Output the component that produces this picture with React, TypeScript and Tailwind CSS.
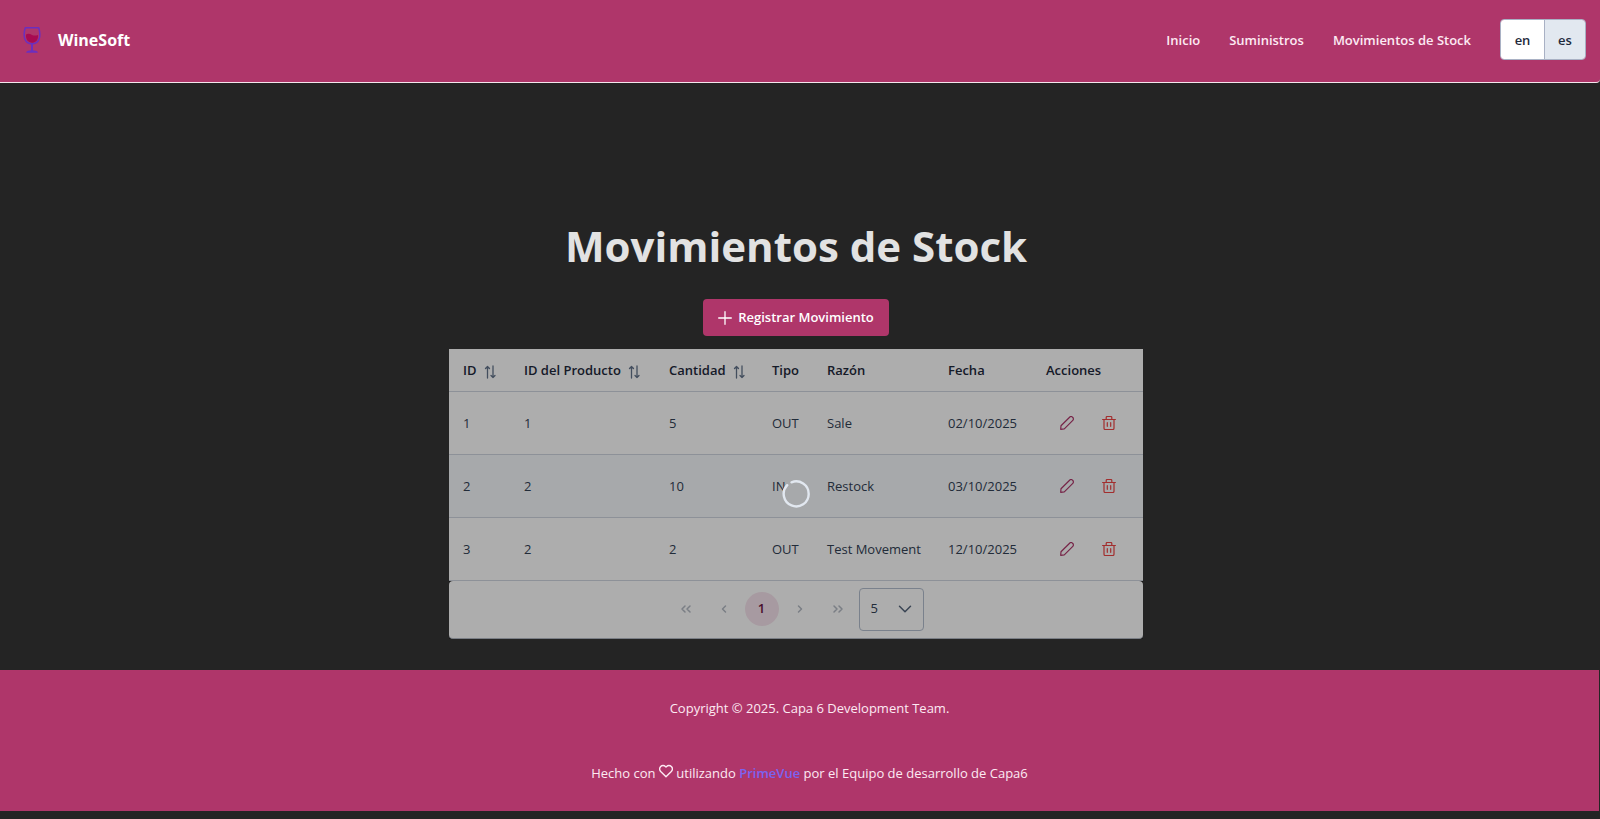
import React from "react";

type Movement = {
  id: number;
  product: number;
  quantity: number;
  type: string;
  reason: string;
  date: string;
};

const movements: Movement[] = [
  { id: 1, product: 1, quantity: 5, type: "OUT", reason: "Sale", date: "02/10/2025" },
  { id: 2, product: 2, quantity: 10, type: "IN", reason: "Restock", date: "03/10/2025" },
  { id: 3, product: 2, quantity: 2, type: "OUT", reason: "Test Movement", date: "12/10/2025" },
];

const columns = [
  { label: "ID", sortable: true, width: "w-[61px]" },
  { label: "ID del Producto", sortable: true, width: "w-[145px]" },
  { label: "Cantidad", sortable: true, width: "w-[103px]" },
  { label: "Tipo", sortable: false, width: "w-[55px]" },
  { label: "Razón", sortable: false, width: "w-[121px]" },
  { label: "Fecha", sortable: false, width: "w-[98px]" },
  { label: "Acciones", sortable: false, width: "w-[111px]" },
];

function WineLogo() {
  return (
    <svg viewBox="0 0 28 28" className="size-7" fill="none" aria-hidden="true">
      <path
        d="M8 8.500c2-1.200 4-.6 6 .4s4.200.8 6 0c.5 4.600-2.200 7.800-6 7.800s-6.500-3.400-6-8.200z"
        fill="#a80a52"
      />
      <path
        d="M7.300 1.800h13.400c1.200 4 1.600 8.200.4 11.200-1.200 3.200-4 4.800-7.100 4.800s-5.900-1.600-7.100-4.800C5.700 10 6.100 5.800 7.300 1.800z"
        stroke="#6a2fc0"
        strokeWidth="1.500"
        strokeLinejoin="round"
      />
      <path d="M14 17.800v7.500" stroke="#6a2fc0" strokeWidth="2" />
      <path d="M8 26.700c.4-1.600 3-2.400 6-2.400s5.600.8 6 2.400z" fill="#6a2fc0" />
    </svg>
  );
}

function SortIcon() {
  return (
    <svg
      viewBox="0 0 14 14"
      className="mt-0.5 size-[14px] text-[#64748b]"
      fill="none"
      stroke="currentColor"
      strokeWidth="1.300"
      strokeLinecap="round"
      strokeLinejoin="round"
      aria-hidden="true"
    >
      <path d="M4.500 13V1.500M2.500 3.500l2-2 2 2M10 1v11.500M8 10.500l2 2 2-2" />
    </svg>
  );
}

function PencilIcon() {
  return (
    <svg
      viewBox="0 0 14 14"
      className="size-[14px]"
      fill="none"
      stroke="currentColor"
      strokeWidth="1.200"
      strokeLinejoin="round"
      aria-hidden="true"
    >
      <path d="M.7 13.300l.3-3.600 8.600-8.500c.8-.8 2-.8 2.800-.1l.4.400c.8.800.8 2 0 2.800L4.300 12.900z" />
    </svg>
  );
}

function TrashIcon() {
  return (
    <svg
      viewBox="0 0 14 14"
      className="size-[14px]"
      fill="none"
      stroke="currentColor"
      strokeWidth="1.200"
      strokeLinecap="round"
      strokeLinejoin="round"
      aria-hidden="true"
    >
      <path d="M.6 3.500h12.800M2 3.500v8.700c0 .8.500 1.300 1.300 1.300h7.400c.8 0 1.300-.5 1.300-1.300V3.500M4.200 3.300V1.600c0-.7.400-1.100 1.100-1.100h3.400c.7 0 1.100.4 1.100 1.100v1.700M5.300 6.700v3.600M8.700 6.700v3.600" />
    </svg>
  );
}

function Chevrons({ d }: { d: string }) {
  return (
    <svg
      viewBox="0 0 14 14"
      className="size-[14px]"
      fill="none"
      stroke="currentColor"
      strokeWidth="1.500"
      strokeLinecap="round"
      strokeLinejoin="round"
      aria-hidden="true"
    >
      <path d={d} />
    </svg>
  );
}

function PageButton({ label, d }: { label: string; d: string }) {
  return (
    <button
      type="button"
      aria-label={label}
      className="flex size-[34px] items-center justify-center rounded-full text-[#b4bac4]"
    >
      <Chevrons d={d} />
    </button>
  );
}

function Header() {
  return (
    <header className="flex items-center justify-between rounded-br border-b border-[#f4e6ed] bg-[#af366a] px-[14px] pt-[19px] pb-[22px]">
      <div className="flex items-center gap-3 pl-1">
        <WineLogo />
        <span className="text-base font-bold text-white">WineSoft</span>
      </div>
      <div className="flex items-center gap-[29px]">
        <nav className="flex gap-[29px] pt-0.5 text-[13px] font-semibold text-[#fdeaf3]">
          <a href="#inicio">Inicio</a>
          <a href="#suministros">Suministros</a>
          <a href="#movimientos">Movimientos de Stock</a>
        </nav>
        <div className="flex h-[41px] overflow-hidden rounded border border-[#a9b1c4] text-[13px] font-semibold text-[#1e293b]">
          <button type="button" className="w-11 border-r border-[#a9b1c4] bg-white pt-0.5">
            en
          </button>
          <button type="button" aria-pressed="true" className="w-10 bg-[#e2e8f0] pt-0.5">
            es
          </button>
        </div>
      </div>
    </header>
  );
}

function Paginator() {
  return (
    <div className="flex h-[58px] items-center justify-center gap-1 rounded border-b border-[#b4bac4] bg-white">
      <PageButton label="Primera página" d="M6 4 3 7l3 3M11 4 8 7l3 3" />
      <PageButton label="Página anterior" d="M8.500 4l-3 3 3 3" />
      <button
        type="button"
        aria-current="page"
        className="size-[34px] rounded-full bg-[#f7e4ed] text-[13px] font-semibold text-[#6b1240]"
      >
        1
      </button>
      <PageButton label="Página siguiente" d="M5.500 4l3 3-3 3" />
      <PageButton label="Última página" d="M3 4l3 3-3 3M8 4l3 3-3 3" />
      <div className="grid items-center">
        <select
          aria-label="Filas por página"
          defaultValue="5"
          className="col-start-1 row-start-1 h-[43px] w-[65px] appearance-none rounded border border-[#b4bfce] bg-white pl-[11px] text-[13px]"
        >
          <option>5</option>
          <option>10</option>
          <option>20</option>
        </select>
        <span className="pointer-events-none col-start-1 row-start-1 mr-3 justify-self-end text-[#55657c]">
          <Chevrons d="M1.500 4.300 7 9.800l5.500-5.500" />
        </span>
      </div>
    </div>
  );
}

function MovementsTable() {
  return (
    <section className="relative w-[694px] max-w-full text-[13px] text-[#334155]" aria-busy="true">
      <table className="w-full table-fixed border-collapse bg-white text-left">
        <thead>
          <tr className="h-[42px] border-b border-[#d0d6e0]">
            {columns.map((c) => (
              <th
                key={c.label}
                scope="col"
                className={`${c.width} pt-0.5 pl-[14px] font-semibold whitespace-nowrap text-[#1e293b]`}
              >
                <span className="flex items-center gap-1.5">
                  {c.label}
                  {c.sortable && <SortIcon />}
                </span>
              </th>
            ))}
          </tr>
        </thead>
        <tbody>
          {movements.map((m) => (
            <tr key={m.id} className="h-[63px] border-b border-[#d0d6e0] even:bg-[#f6f9fc]">
              <td className="pt-0.5 pl-[14px]">{m.id}</td>
              <td className="pt-0.5 pl-[14px]">{m.product}</td>
              <td className="pt-0.5 pl-[14px]">{m.quantity}</td>
              <td className="pt-0.5 pl-[14px]">{m.type}</td>
              <td className="pt-0.5 pl-[14px] whitespace-nowrap">{m.reason}</td>
              <td className="pt-0.5 pl-[14px]">{m.date}</td>
              <td className="pl-[14px]">
                <div className="flex">
                  <button
                    type="button"
                    aria-label={`Editar ${m.id}`}
                    className="flex h-[34px] w-[42px] items-center justify-center text-[#af366a]"
                  >
                    <PencilIcon />
                  </button>
                  <button
                    type="button"
                    aria-label={`Eliminar ${m.id}`}
                    className="flex h-[34px] w-[42px] items-center justify-center text-[#ef4444]"
                  >
                    <TrashIcon />
                  </button>
                </div>
              </td>
            </tr>
          ))}
        </tbody>
      </table>
      <Paginator />
      <div className="absolute inset-0 flex items-center justify-center bg-black/32">
        <svg viewBox="0 0 28 28" className="size-7" fill="none" role="img" aria-label="Cargando">
          <path
            d="M5.200 5.200A12.500 12.500 0 1 0 9.500 2.300"
            stroke="#e2e8f0"
            strokeWidth="2.400"
            strokeLinecap="round"
          />
        </svg>
      </div>
    </section>
  );
}

export default function App() {
  return (
    <div className="min-h-screen bg-[#242424] font-['Open_Sans','Noto_Sans',sans-serif] text-[13px]">
      <Header />
      <main className="flex flex-col items-center pt-[133px] pr-2 pb-[31px]">
        <h1 className="text-[42px] leading-[60px] font-bold text-[#e2e2e2]">Movimientos de Stock</h1>
        <button
          type="button"
          className="mt-[23px] mb-[13px] flex h-[37px] items-center gap-1.5 rounded bg-[#af366a] px-[15px] font-semibold text-white"
        >
          <svg
            viewBox="0 0 14 14"
            className="size-[14px]"
            stroke="currentColor"
            strokeWidth="1.300"
            strokeLinecap="round"
            aria-hidden="true"
          >
            <path d="M7 .7v12.600M.7 7h12.600" />
          </svg>
          Registrar Movimiento
        </button>
        <MovementsTable />
      </main>
      <footer className="mr-px flex flex-col items-center gap-[45px] bg-[#af366a] pt-7 pb-7 pl-5 leading-5 text-[#fdeaf3]">
        <p>Copyright © 2025. Capa 6 Development Team.</p>
        <p>
          Hecho con{" "}
          <svg
            viewBox="0 0 14 14"
            className="inline size-[14px] align-baseline"
            fill="none"
            stroke="currentColor"
            strokeWidth="1.400"
            strokeLinejoin="round"
            role="img"
            aria-label="amor"
          >
            <path d="M7 12.800 1.700 7.400C.4 6 .4 3.900 1.700 2.500s3.400-1.300 4.700 0l.6.600.6-.6c1.300-1.300 3.400-1.300 4.700 0s1.300 3.500 0 4.900z" />
          </svg>{" "}
          utilizando{" "}
          <a href="#primevue" className="font-semibold text-[#7a63f0]">
            PrimeVue
          </a>{" "}
          por el Equipo de desarrollo de Capa6
        </p>
      </footer>
    </div>
  );
}
